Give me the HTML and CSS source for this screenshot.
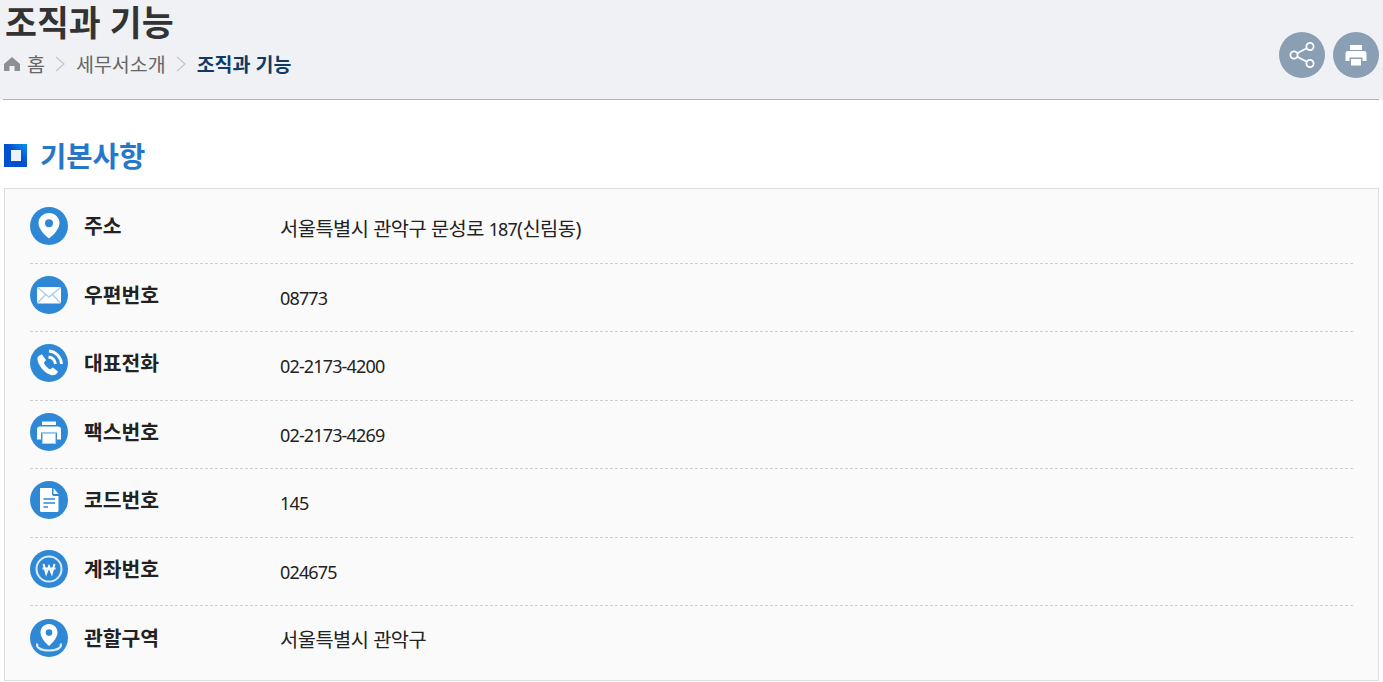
FILE: index.html

```html
<!DOCTYPE html>
<html lang="ko">
<head>
  <meta charset="UTF-8" />
  <title>조직과 기능</title>
  <link rel="stylesheet" href="styles.css">
</head>
<body>
  <header class="page-head">
    <div class="head-text">
      <h1>조직과 기능</h1>
      <nav class="crumbs">
        <svg class="home" viewBox="0 0 16 16"><path d="M8 1 L16 8 V15 H10.5 V10 H5.5 V15 H0 V8 Z" fill="#8c9095"/></svg>
        <span>홈</span>
        <svg class="sep" viewBox="0 0 10 16"><path d="M1 1 L9 8 L1 15" fill="none" stroke="#c4c6ca" stroke-width="1.2"/></svg>
        <span>세무서소개</span>
        <svg class="sep" viewBox="0 0 10 16"><path d="M1 1 L9 8 L1 15" fill="none" stroke="#c4c6ca" stroke-width="1.2"/></svg>
        <strong>조직과 기능</strong>
      </nav>
    </div>
    <div class="head-btns">
      <button class="round-btn" aria-label="공유">
        <svg viewBox="0 0 46 46" width="46" height="46" fill="none" stroke="#fff" stroke-width="1.8">
          <circle cx="15" cy="23" r="3.6"/><circle cx="31" cy="14.5" r="3.6"/><circle cx="31" cy="31.5" r="3.6"/>
          <path d="M18.2 21.3 L27.8 16.2 M18.2 24.7 L27.8 29.8"/>
        </svg>
      </button>
      <button class="round-btn" aria-label="인쇄">
        <svg viewBox="0 0 46 46" width="46" height="46" fill="#fff">
          <path d="M17 13 H29 V18 H17 Z"/>
          <path d="M15 19 H31 Q33.5 19 33.5 21.5 V29 H29.5 V25.5 H16.5 V29 H12.5 V21.5 Q12.5 19 15 19 Z"/>
          <path d="M18 27 H28 V33.5 H18 Z"/>
        </svg>
      </button>
    </div>
  </header>

  <h2 class="sec-title"><span class="sec-mark"></span>기본사항</h2>

  <div class="info-box">
    <div class="info-row">
      <svg class="ico" viewBox="0 0 38 38"><circle cx="19" cy="19" r="19" fill="#2f88d6"/><path fill-rule="evenodd" fill="#fff" d="M19 6 C13 6 8.5 10.5 8.5 16 C8.5 22 14.5 28 19 31.5 C23.5 28 29.5 22 29.5 16 C29.5 10.5 25 6 19 6 Z M19 12.3 A4 4 0 1 1 19 20.3 A4 4 0 1 1 19 12.3 Z"/></svg>
      <b class="label">주소</b>
      <span class="value">서울특별시 관악구 문성로 <span class="num">187</span>(신림동)</span>
    </div>
    <div class="info-row">
      <svg class="ico" viewBox="0 0 38 38"><circle cx="19" cy="19" r="19" fill="#2f88d6"/><rect x="7" y="11" width="24" height="16.5" rx="1.5" fill="#fff"/><path d="M7.5 11.5 L19 21 L30.5 11.5 M7.5 27 L15.5 18.5 M30.5 27 L22.5 18.5" fill="none" stroke="#a5cff0" stroke-width="1.4"/></svg>
      <b class="label">우편번호</b>
      <span class="value num">08773</span>
    </div>
    <div class="info-row">
      <svg class="ico" viewBox="0 0 38 38"><circle cx="19" cy="19" r="19" fill="#2f88d6"/><path fill="#fff" d="M12 10.5 L16 16 L13.8 18.8 C15 21.5 17.500 24 20 25.500 L22.800 23.500 L28 27.500 C27 30.500 24 32 21 31 C14.500 29 8.500 22 7.500 16 C7 13 9 11 12 10.500 Z"/><path d="M18.500 13 C22.500 13.500 25 16.500 25.500 20 M19 7 C25.500 7.500 31 13 31.500 20" fill="none" stroke="#fff" stroke-width="2.800"/></svg>
      <b class="label">대표전화</b>
      <span class="value num">02-2173-4200</span>
    </div>
    <div class="info-row">
      <svg class="ico" viewBox="0 0 38 38"><circle cx="19" cy="19" r="19" fill="#2f88d6"/><path fill="#fff" d="M12 8.5 H26 V12 H12 Z M10 13.5 H28 Q31 13.5 31 16.5 V26.5 H27 V19.5 H11 V26.5 H7 V16.5 Q7 13.5 10 13.5 Z"/><path fill="#fff" stroke="#a5cff0" stroke-width="1.2" d="M12.5 20.5 H25.5 V30.5 H12.5 Z"/></svg>
      <b class="label">팩스번호</b>
      <span class="value num">02-2173-4269</span>
    </div>
    <div class="info-row">
      <svg class="ico" viewBox="0 0 38 38"><circle cx="19" cy="19" r="19" fill="#2f88d6"/><path fill="#fff" d="M10 7 H22 V13 Q22 15 24 15 H28.5 V29.5 Q28.5 31 27 31 H11.5 Q10 31 10 29.5 Z M23.500 7 L28.5 13 H23.5 Z"/><path d="M13.5 18 H25 M13.5 22 H25 M13.5 26 H18" stroke="#2f88d6" stroke-width="1.5"/></svg>
      <b class="label">코드번호</b>
      <span class="value num">145</span>
    </div>
    <div class="info-row">
      <svg class="ico" viewBox="0 0 38 38"><circle cx="19" cy="19" r="19" fill="#2f88d6"/><circle cx="19" cy="19" r="12.500" fill="none" stroke="#dcecf9" stroke-width="2"/><path d="M13.500 14 L16.200 23.500 L19 16.500 L21.800 23.500 L24.500 14 M12.500 18.500 H25.500" fill="none" stroke="#fff" stroke-width="2"/></svg>
      <b class="label">계좌번호</b>
      <span class="value num">024675</span>
    </div>
    <div class="info-row">
      <svg class="ico" viewBox="0 0 38 38"><circle cx="19" cy="19" r="19" fill="#2f88d6"/><path fill-rule="evenodd" fill="#fff" d="M19 5 C14 5 10.5 8.8 10.5 13.5 C10.5 18.5 15.5 24 19 27 C22.5 24 27.5 18.5 27.5 13.5 C27.5 8.8 24 5 19 5 Z M19 10.3 A3.300 3.300 0 1 1 19 16.9 A3.300 3.300 0 1 1 19 10.3 Z"/><path d="M7.5 24.5 C5.5 28.5 11 31.5 19 31.5 C27 31.5 32.5 28.5 30.5 24.5" fill="none" stroke="#dcecf9" stroke-width="2.2"/></svg>
      <b class="label">관할구역</b>
      <span class="value">서울특별시 관악구</span>
    </div>
  </div>
</body>
</html>
```

FILE: styles.css

```css
body { margin: 0; background: #fff; font-family: "Noto Sans", "Noto Sans CJK KR", sans-serif; color: #222; }

.page-head {
  display: flex;
  justify-content: space-between;
  height: 100px;
  padding-left: 3px;
  background: #eff1f5;
  box-sizing: border-box;
  position: relative;
}
.page-head::after {
  content: "";
  position: absolute;
  left: 3px;
  right: 4px;
  bottom: 0;
  height: 1px;
  background: #aeb0b5;
}
h1 { margin: 0; padding-left: 2px; font-size: 34.7px; line-height: 46px; font-weight: 700; color: #333; }

.crumbs { display: flex; align-items: center; height: 36px; margin-top: -1px; font-size: 19.5px; color: #666; }
.crumbs .home { width: 16px; height: 16px; margin: 2px 7px 0 1px; }
.crumbs .sep { width: 10px; height: 16px; margin: 2px 10.5px 0 10.5px; }
.crumbs strong { color: #0f3a63; font-weight: 700; }

.head-btns { display: flex; gap: 8px; padding: 32px 4px 0 0; }
.round-btn { width: 46px; height: 46px; padding: 0; border: none; border-radius: 50%; background: #8a9fb3; }
.round-btn svg { display: block; }

.sec-title {
  display: flex;
  align-items: center;
  gap: 13px;
  margin: 32px 0 0 4px;
  height: 44px;
  font-size: 28.6px;
  font-weight: 700;
  color: #2577c9;
}
.sec-mark {
  display: flex;
  align-items: center;
  justify-content: center;
  width: 23px;
  height: 23px;
  margin-top: 2px;
  background: linear-gradient(45deg, #0050d0 55%, #0a78e0 80%, #0098e8 100%);
  flex: none;
}
.sec-mark::before {
  content: "";
  width: 10px;
  height: 11px;
  background: #eef3fb;
}

.info-box {
  margin: 12px 4px 0 4px;
  padding: 6px 25px 6px;
  border: 1px solid #dedede;
  background: #fafafa;
}
.info-row {
  display: flex;
  align-items: center;
  height: 68.5px;
  box-sizing: border-box;
  border-bottom: 1px dashed #cfcfcf;
}
.info-row:last-child { border-bottom: none; height: 68px; }
.ico { width: 38px; height: 38px; flex: none; margin-top: -5px; }
.label { width: 196px; margin: -7px 0 0 16px; font-size: 20.4px; font-weight: 700; color: #222; flex: none; }
.value { font-size: 19.8px; color: #222; letter-spacing: -0.5px; margin-top: -3px; }
.num { font-size: 18px; letter-spacing: -0.85px; }
.value.num { margin-top: 1px; }
```
